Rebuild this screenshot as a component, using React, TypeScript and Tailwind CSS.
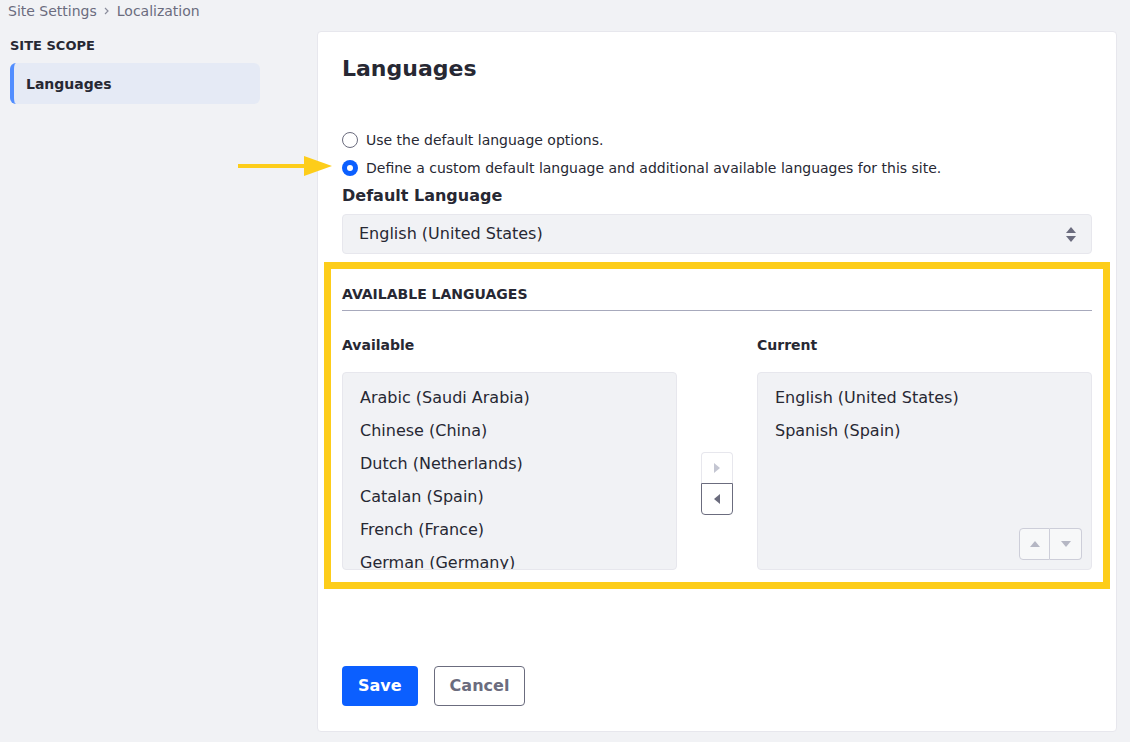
import React from "react";

const available = [
  "Arabic (Saudi Arabia)",
  "Chinese (China)",
  "Dutch (Netherlands)",
  "Catalan (Spain)",
  "French (France)",
  "German (Germany)",
];

const current = ["English (United States)", "Spanish (Spain)"];

const Caret = ({ dir, color }: { dir: "up" | "down" | "left" | "right"; color: string }) => {
  const pts = {
    up: "0,6 5,0 10,6",
    down: "0,0 10,0 5,6",
    left: "6,0 6,10 0,5",
    right: "0,0 6,5 0,10",
  }[dir];
  const vertical = dir === "up" || dir === "down";
  return (
    <svg
      width={vertical ? 10 : 6}
      height={vertical ? 6 : 10}
      viewBox={vertical ? "0 0 10 6" : "0 0 6 10"}
    >
      <polygon points={pts} fill={color} />
    </svg>
  );
};

const Radio = ({ checked, label }: { checked?: boolean; label: string }) => (
  <label className="flex items-center h-6 gap-2 text-sm text-[#272833]">
    {checked ? (
      <span className="w-4 h-4 rounded-full bg-[#0b5fff] flex items-center justify-center">
        <span className="w-[6px] h-[6px] rounded-full bg-white" />
      </span>
    ) : (
      <span className="w-4 h-4 rounded-full border border-[#6b6c7e] bg-white" />
    )}
    {label}
  </label>
);

export default function App() {
  return (
    <div
      className="min-h-screen bg-[#f1f2f5] text-[#272833]"
      style={{ fontFamily: '"DejaVu Sans", sans-serif' }}
    >
      <div className="flex items-center h-[22px] px-2 text-sm text-[#6b6c7e]">
        <span>Site Settings</span>
        <span className="mx-[7px] flex items-center">
          <svg width="6" height="8" viewBox="0 0 6 8">
            <path d="M1 1 L4 4 L1 7" stroke="#8b8d9c" strokeWidth="1.2" fill="none" />
          </svg>
        </span>
        <span>Localization</span>
      </div>

      <div className="flex mt-[9px] pl-[10px] pb-[10px]">
        <aside className="w-[250px] pt-[6px]">
          <div className="text-[13px] leading-[18px] font-bold uppercase">Site Scope</div>
          <div className="mt-2 h-[41px] flex items-center rounded-md bg-[#e5eaf5] border-l-4 border-[#528eff] pl-3 text-sm font-bold">
            Languages
          </div>
        </aside>

        <main className="ml-[57px] w-[800px] bg-white border border-[#e7e7ed] rounded pt-[23px] pb-[25px] px-6">
          <h1 className="text-[22px] leading-7 font-bold">Languages</h1>

          <div className="mt-[45px] flex flex-col gap-1">
            <Radio label="Use the default language options." />
            <div className="relative">
              <Radio
                checked
                label="Define a custom default language and additional available languages for this site."
              />
              <svg
                className="absolute left-[-104px] top-[-2px]"
                width="96"
                height="24"
                viewBox="0 0 96 24"
              >
                <rect x="0" y="10" width="70" height="4" fill="#fdcd1a" />
                <polygon points="66,2 94,12 66,22" fill="#fdcd1a" />
              </svg>
            </div>
          </div>

          <div className="mt-1 text-base leading-6 font-bold">Default Language</div>
          <div className="mt-[6px] h-10 flex items-center justify-between rounded border border-[#e7e7ed] bg-[#f1f2f5] pl-4 pr-[15px] text-base">
            <span>English (United States)</span>
            <span className="flex flex-col gap-[3px]">
              <Caret dir="up" color="#6b6c7e" />
              <Caret dir="down" color="#6b6c7e" />
            </span>
          </div>

          <section className="relative mt-4 pt-[14px]">
            <div className="absolute top-[-8px] bottom-[-19px] left-[-18px] right-[-18px] border-[7px] border-[#fdcd1a] pointer-events-none" />
            <div className="text-sm leading-5 font-bold uppercase pb-[6px] border-b border-[#a7a9bc]">
              Available Languages
            </div>

            <div className="mt-6 flex">
              <div className="w-[335px]">
                <div className="text-sm leading-5 font-bold">Available</div>
                <div className="mt-[17px] h-[198px] overflow-hidden rounded border border-[#e7e7ed] bg-[#f1f2f5] pt-2 pl-[17px] pr-4">
                  {available.map((l) => (
                    <div key={l} className="h-[33px] leading-[33px] text-base">
                      {l}
                    </div>
                  ))}
                </div>
              </div>

              <div className="w-[80px] flex justify-center">
                <div className="mt-[117px] flex flex-col">
                  <button className="w-8 h-[31px] flex items-center justify-center rounded-t border border-b-0 border-[#e7e7ed] bg-white">
                    <Caret dir="right" color="#c4c6d2" />
                  </button>
                  <button className="w-8 h-8 flex items-center justify-center rounded-b border border-[#6b6c7e] bg-white">
                    <Caret dir="left" color="#6b6c7e" />
                  </button>
                </div>
              </div>

              <div className="w-[335px]">
                <div className="text-sm leading-5 font-bold">Current</div>
                <div className="mt-[17px] h-[198px] flex flex-col rounded border border-[#e7e7ed] bg-[#f1f2f5] pt-2 pl-[17px] pr-4 pb-[9px]">
                  {current.map((l) => (
                    <div key={l} className="h-[33px] leading-[33px] text-base">
                      {l}
                    </div>
                  ))}
                  <div className="mt-auto self-end mr-[-7px] flex">
                    <button className="w-[31px] h-8 flex items-center justify-center rounded-l border border-[#cdced9] bg-[#f7f8f9]">
                      <Caret dir="up" color="#b5b7c4" />
                    </button>
                    <button className="w-[32px] h-8 flex items-center justify-center rounded-r border border-l-0 border-[#cdced9] bg-[#f7f8f9]">
                      <Caret dir="down" color="#b5b7c4" />
                    </button>
                  </div>
                </div>
              </div>
            </div>
          </section>

          <div className="mt-[96px] flex gap-4">
            <button className="h-10 px-4 rounded bg-[#0b5fff] text-white text-base font-bold">
              Save
            </button>
            <button className="h-10 px-[15px] rounded border border-[#6b6c7e] bg-white text-[#6b6c7e] text-base font-bold">
              Cancel
            </button>
          </div>
        </main>
      </div>
    </div>
  );
}
